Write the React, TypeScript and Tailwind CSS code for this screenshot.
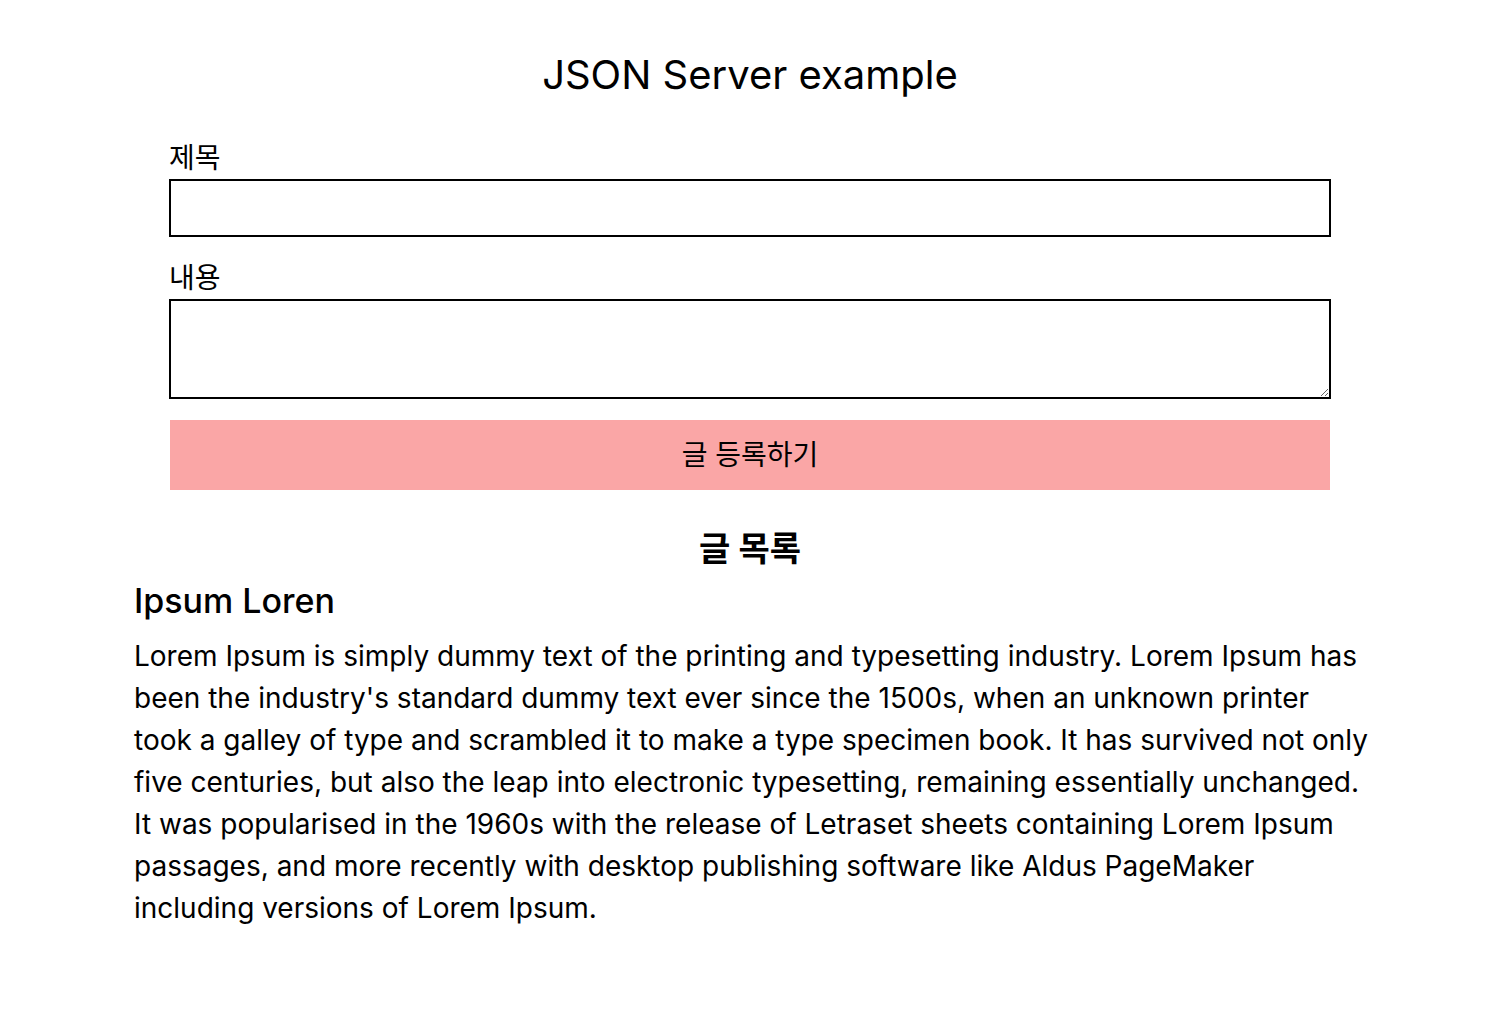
import { useState } from 'react';

const FONT = 'font-["Inter","Noto_Sans_CJK_KR",sans-serif]';

const POSTS = [
  {
    id: 1,
    title: 'Ipsum Loren',
    body:
      "Lorem Ipsum is simply dummy text of the printing and typesetting industry. Lorem Ipsum has been the industry's standard dummy text ever since the 1500s, when an unknown printer took a galley of type and scrambled it to make a type specimen book. It has survived not only five centuries, but also the leap into electronic typesetting, remaining essentially unchanged. It was popularised in the 1960s with the release of Letraset sheets containing Lorem Ipsum passages, and more recently with desktop publishing software like Aldus PageMaker including versions of Lorem Ipsum.",
  },
];

export default function App() {
  const [title, setTitle] = useState('');
  const [body, setBody] = useState('');

  return (
    <div className={`${FONT} min-h-screen bg-white text-black`}>
      <div className="w-[1500px]">
        <div className="mx-auto w-[1232px] pt-[51px]">
          <h1 className="text-center text-[40px] leading-[48px] font-normal">JSON Server example</h1>

          {/* form */}
          <form className="mx-[35px] mt-[38px] flex flex-col" onSubmit={e => e.preventDefault()}>
            <label className="text-[28px] leading-[42px]">제목</label>
            <input
              value={title}
              onChange={e => setTitle(e.target.value)}
              className="h-[58px] border-2 border-black px-2 text-[28px] outline-none"
            />
            <label className="mt-[20px] text-[28px] leading-[42px]">내용</label>
            <textarea
              value={body}
              onChange={e => setBody(e.target.value)}
              className="h-[100px] border-2 border-black px-2 text-[28px] outline-none"
            />
            <button
              type="submit"
              className="mx-px mt-[21px] h-[70px] bg-[#faa6a6] text-[28px]"
            >
              글 등록하기
            </button>
          </form>

          {/* list */}
          <h2 className="mt-[38px] text-center text-[34px] leading-[42px] font-bold">글 목록</h2>
          {POSTS.map(p => (
            <div key={p.id} className="mt-[10px]">
              <h3 className="text-[34px] leading-[42px] font-medium">{p.title}</h3>
              <p className="mt-[13px] w-[1235px] text-[28px] leading-[42px]">{p.body}</p>
            </div>
          ))}
        </div>
      </div>
    </div>
  );
}
